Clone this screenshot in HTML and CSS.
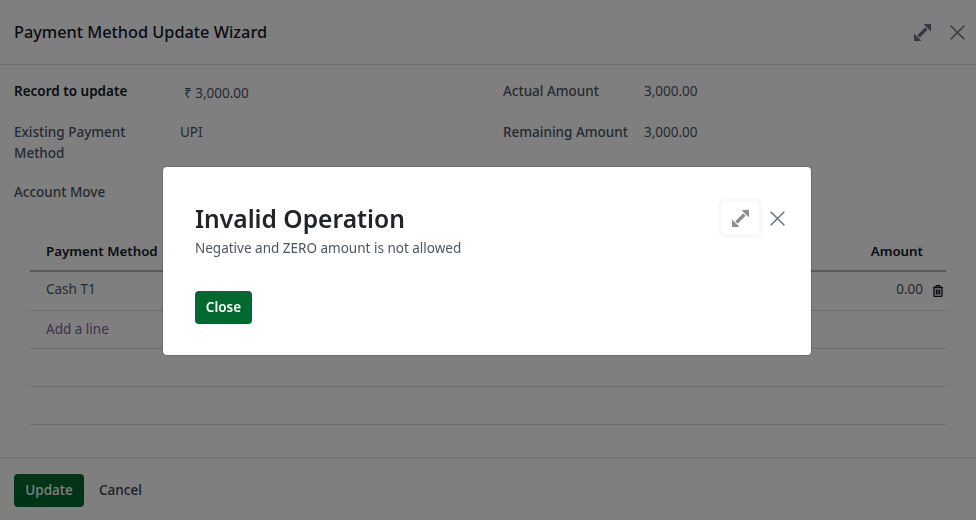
FILE: index.html
```html
<!DOCTYPE html>
<html lang="en">
<head>
    <meta charset="UTF-8">
    <title>Payment Method Update Wizard</title>
    <link rel="stylesheet" href="styles.css">
</head>
<body>
    <div class="wizard">
        <header class="wizard-header">
            <h4>Payment Method Update Wizard</h4>
            <div class="header-icons">
                <svg class="icon-expand" width="17" height="17" viewBox="0 0 17 17"><path class="stem" d="M4.5 12.5L12.5 4.5"/><path d="M9.5 0H17V7.5ZM0 9.5V17H7.5Z"/></svg>
                <svg class="icon-close" width="15" height="15" viewBox="0 0 15 15"><path d="M.7 .7L14.3 14.3M14.3 .7L.7 14.3"/></svg>
            </div>
        </header>
        <main class="wizard-body">
            <div class="fields">
                <div class="field">
                    <label class="label-strong">Record to update</label>
                    <span class="value value-money">₹ 3,000.00</span>
                </div>
                <div class="field field-right">
                    <label>Actual Amount</label>
                    <span class="value">3,000.00</span>
                </div>
                <div class="field field-tall">
                    <label>Existing Payment Method</label>
                    <span class="value">UPI</span>
                </div>
                <div class="field field-right">
                    <label>Remaining Amount</label>
                    <span class="value">3,000.00</span>
                </div>
                <div class="field">
                    <label>Account Move</label>
                </div>
            </div>
            <div class="lines">
                <div class="line line-head">
                    <span>Payment Method</span>
                    <span class="amount">Amount</span>
                </div>
                <div class="line line-first">
                    <span>Cash T1</span>
                    <span class="amount">0.00</span>
                    <svg class="icon-trash" width="12" height="12" viewBox="0 0 12 12"><path d="M1 2.5H11M4 2.5V1.3Q4 .6 4.7 .6H7.3Q8 .6 8 1.3V2.5M2 2.5V10.4Q2 11.4 3 11.4H9Q10 11.4 10 10.4V2.5M4.3 4.5V9.6M6 4.5V9.6M7.7 4.5V9.6"/></svg>
                </div>
                <div class="line"><a class="add-line">Add a line</a></div>
                <div class="line"></div>
                <div class="line"></div>
            </div>
        </main>
        <footer class="wizard-footer">
            <button class="btn-update">Update</button>
            <button class="btn-cancel">Cancel</button>
        </footer>
    </div>

    <div class="backdrop">
        <div class="dialog">
            <div class="dialog-text">
                <h2>Invalid Operation</h2>
                <p>Negative and ZERO amount is not allowed</p>
                <button class="btn-close">Close</button>
            </div>
            <div class="dialog-icons">
                <span class="expand-box">
                    <svg class="icon-expand" width="17" height="17" viewBox="0 0 17 17"><path class="stem" d="M4.5 12.5L12.5 4.5"/><path d="M9.5 0H17V7.5ZM0 9.5V17H7.5Z"/></svg>
                </span>
                <svg class="icon-close" width="15" height="15" viewBox="0 0 15 15"><path d="M.7 .7L14.3 14.3M14.3 .7L.7 14.3"/></svg>
            </div>
        </div>
    </div>
</body>
</html>
```

FILE: styles.css
```css
/* Base page */
body {
    font-family: 'Noto Sans', 'Open Sans', sans-serif;
    font-size: 13.5px;
    margin: 0;
    background-color: #fff;
    color: #4b5563;
    overflow: hidden;
}

.wizard {
    display: flex;
    flex-direction: column;
    height: 520px;
}

.wizard-header {
    display: flex;
    align-items: center;
    justify-content: space-between;
    height: 64px;
    padding: 0 11px 0 14px;
    border-bottom: 1px solid #dee2e6;
}
.wizard-header h4 {
    margin: 0;
    font-size: 16.3px;
    font-weight: 500;
    color: #111827;
}
.header-icons {
    display: flex;
    align-items: center;
    gap: 19px;
}
.icon-expand path {
    fill: #6b7280;
}
.icon-expand .stem {
    fill: none;
    stroke: #6b7280;
    stroke-width: 3.4;
}
.icon-close path {
    fill: none;
    stroke: #6b7280;
    stroke-width: 1.5;
}

.wizard-body {
    flex: 1;
    padding-top: 16px;
}

/* Form fields */
.fields {
    display: grid;
    grid-template-columns: 489px 1fr;
    padding-left: 14px;
}
.field {
    display: flex;
    align-items: flex-start;
    min-height: 41px;
    line-height: 21px;
    font-weight: 500;
}
.field-tall {
    margin-bottom: 18px;
}
.field label {
    width: 166px;
    flex-shrink: 0;
    padding-right: 40px;
    box-sizing: border-box;
}
.field-right label {
    width: 141px;
    padding-right: 0;
}
.label-strong {
    font-weight: 600;
    color: #111827;
}
.value {
    font-weight: 400;
}
.value-money {
    margin: 2px 0 0 4px;
}

/* Lines table */
.lines {
    margin: 8px 30px 0;
}
.line {
    display: flex;
    align-items: center;
    box-sizing: border-box;
    height: 38px;
    padding: 0 23px 2px 16px;
    border-bottom: 1px solid #d8dadd;
}
.line-head {
    height: 41px;
    padding-bottom: 0;
    border-bottom: 2px solid #adb5bd;
    font-size: 13.3px;
    font-weight: 600;
    color: #111827;
}
.line-first {
    height: 39px;
    padding-bottom: 4px;
}
.amount {
    margin-left: auto;
}
.icon-trash {
    margin: 3px -21px 0 9px;
    fill: none;
    stroke: #111827;
    stroke-width: 1.3;
}
.add-line {
    color: #7a5f9a;
}

/* Footer */
.wizard-footer {
    display: flex;
    align-items: flex-start;
    gap: 15px;
    height: 46px;
    padding: 16px 0 0 14px;
    border-top: 1px solid #dee2e6;
}
button {
    font-family: inherit;
    font-size: 13.5px;
    font-weight: 500;
    height: 33px;
    padding: 0 0 2px;
    border: none;
    border-radius: 4px;
    background: none;
}
.btn-update,
.btn-close {
    background-color: #00692f;
    color: #fff;
}
.btn-update {
    width: 70px;
}
.btn-cancel {
    color: #374151;
}

/* Alert on top of the page */
.backdrop {
    position: fixed;
    inset: 0;
    background-color: rgba(0, 0, 0, 0.5);
}
.dialog {
    position: absolute;
    left: 163px;
    top: 167px;
    box-sizing: border-box;
    width: 648px;
    height: 188px;
    display: flex;
    justify-content: space-between;
    padding: 31px 26px 0 32px;
    background-color: #fff;
    border-radius: 4px;
    box-shadow: 0 0 0 1px rgba(0, 0, 0, 0.15);
}
.dialog h2 {
    margin: 1px 0 0;
    font-size: 24.6px;
    line-height: 40px;
    font-weight: 600;
    color: #212529;
}
.dialog p {
    margin: 0 0 34px;
    line-height: 18px;
    color: #4b5563;
}
.btn-close {
    display: block;
    width: 57px;
    font-weight: 600;
}
.dialog-icons {
    display: flex;
    align-items: flex-start;
    gap: 7px;
}
.expand-box {
    display: flex;
    align-items: center;
    justify-content: center;
    box-sizing: border-box;
    width: 45px;
    height: 40px;
    border: 4px solid #f8f9fa;
    border-radius: 8px;
}
.dialog-icons .icon-close {
    margin-top: 13px;
}
.dialog-icons .icon-expand path {
    fill: #8b8e92;
}
.dialog-icons .icon-expand .stem {
    fill: none;
    stroke: #8b8e92;
}
.dialog-icons .icon-close path {
    stroke: #6b7280;
}
```
